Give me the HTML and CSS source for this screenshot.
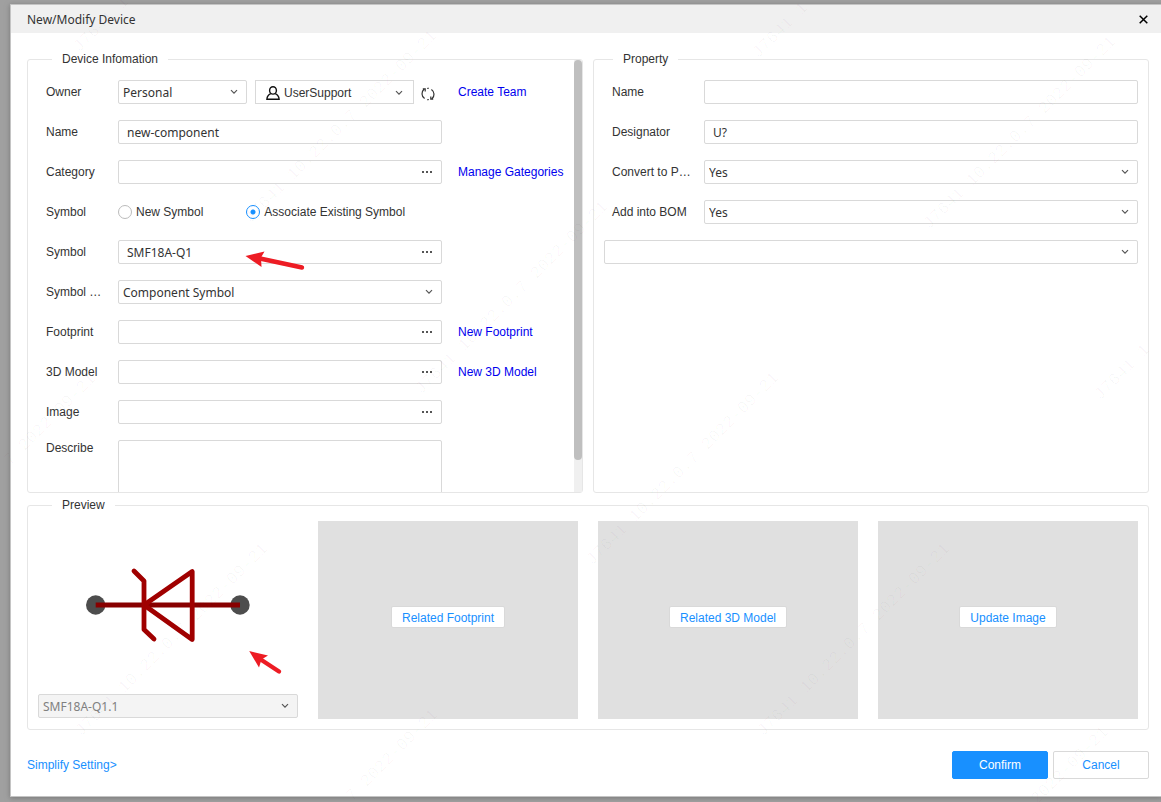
FILE: index.html
```html
<!DOCTYPE html>
<html lang="en">
<head>
<meta charset="utf-8">
<title>New/Modify Device</title>
<link rel="stylesheet" href="styles.css">
</head>
<body>
<svg class="sprite" aria-hidden="true">
  <symbol id="chevron" viewBox="0 0 8 6"><path d="M1 1.2 L4 4.2 L7 1.2" fill="none" stroke="currentColor" stroke-width="1.2"/></symbol>
</svg>

<main class="dialog">
  <header class="titlebar">
    <h1 class="title">New/Modify Device</h1>
    <button class="close" type="button" aria-label="Close">
      <svg width="9" height="9" viewBox="0 0 9 9"><path d="M0.7 0.7 L8.3 8.3 M8.3 0.7 L0.7 8.3" stroke="#000" stroke-width="1.5"/></svg>
    </button>
  </header>

  <form class="content">
    <div class="panels">
      <fieldset class="panel">
        <legend>Device Infomation</legend>
        <div class="scroller">
          <div class="rows device-rows">
            <div class="row">
              <label for="owner">Owner</label>
              <div class="owner">
                <div class="select">
                  <select id="owner"><option>Personal</option></select>
                  <svg class="chev"><use href="#chevron"/></svg>
                </div>
                <button class="user" type="button">
                  <svg width="14" height="14" viewBox="0 0 14 14" fill="none" stroke="#111" stroke-width="1.4"><ellipse cx="7" cy="4.400" rx="3.400" ry="3.700"/><path d="M4.800 7.600 C2.400 8.600 1.100 10.200 0.900 13.200 H13.100 C12.900 10.200 11.600 8.600 9.200 7.600"/></svg>
                  <span>UserSupport</span>
                  <svg class="chev"><use href="#chevron"/></svg>
                </button>
                <button class="refresh" type="button" aria-label="Refresh">
                  <svg width="14" height="14" viewBox="0 0 14 14" fill="none" stroke="#333" stroke-width="1.200"><path d="M3.600 11.600 C0.200 9.200 0.300 4.600 3 2.200 M1.800 1.800 H4.200 V4.400"/><path d="M10.400 2.400 C13.800 4.800 13.700 9.400 11 11.800 M12.200 12.200 H9.800 V9.600"/><path d="M6 1.400 L8 1.200 M6 12.800 L8 12.600" stroke-width="0.900"/></svg>
                </button>
              </div>
              <a href="#team">Create Team</a>
            </div>
            <div class="row">
              <label for="name">Name</label>
              <input class="text" id="name" type="text" value="new-component">
            </div>
            <div class="row">
              <label for="category">Category</label>
              <div class="picker"><input class="text" id="category" type="text"><button class="more" type="button" aria-label="Browse categories"><i></i><i></i><i></i></button></div>
              <a href="#categories">Manage Gategories</a>
            </div>
            <div class="row">
              <span>Symbol</span>
              <div class="radios">
                <label class="radio"><input type="radio" name="mode"><span>New Symbol</span></label>
                <label class="radio"><input type="radio" name="mode" checked><span>Associate Existing Symbol</span></label>
              </div>
            </div>
            <div class="row">
              <label for="symbol">Symbol</label>
              <div class="picker"><input class="text" id="symbol" type="text" value="SMF18A-Q1"><button class="more" type="button" aria-label="Browse symbols"><i></i><i></i><i></i></button></div>
            </div>
            <div class="row">
              <label for="symbol-type">Symbol …</label>
              <div class="select">
                <select id="symbol-type"><option>Component Symbol</option></select>
                <svg class="chev"><use href="#chevron"/></svg>
              </div>
            </div>
            <div class="row">
              <label for="footprint">Footprint</label>
              <div class="picker"><input class="text" id="footprint" type="text"><button class="more" type="button" aria-label="Browse footprints"><i></i><i></i><i></i></button></div>
              <a href="#footprint">New Footprint</a>
            </div>
            <div class="row">
              <label for="model">3D Model</label>
              <div class="picker"><input class="text" id="model" type="text"><button class="more" type="button" aria-label="Browse models"><i></i><i></i><i></i></button></div>
              <a href="#model">New 3D Model</a>
            </div>
            <div class="row">
              <label for="image">Image</label>
              <div class="picker"><input class="text" id="image" type="text"><button class="more" type="button" aria-label="Browse images"><i></i><i></i><i></i></button></div>
            </div>
            <div class="row row-area">
              <label for="describe">Describe</label>
              <textarea class="text area" id="describe"></textarea>
            </div>
          </div>
          <div class="track"><div class="thumb"></div></div>
        </div>
      </fieldset>

      <fieldset class="panel property">
        <legend>Property</legend>
        <div class="rows property-rows">
          <div class="row">
            <label for="p-name">Name</label>
            <input class="text" id="p-name" type="text">
          </div>
          <div class="row">
            <label for="designator">Designator</label>
            <input class="text" id="designator" type="text" value="U?">
          </div>
          <div class="row">
            <label for="pcb">Convert to P…</label>
            <div class="select"><select id="pcb"><option>Yes</option></select><svg class="chev"><use href="#chevron"/></svg></div>
          </div>
          <div class="row">
            <label for="bom">Add into BOM</label>
            <div class="select"><select id="bom"><option>Yes</option></select><svg class="chev"><use href="#chevron"/></svg></div>
          </div>
          <div class="select"><select aria-label="Add property"><option></option></select><svg class="chev"><use href="#chevron"/></svg></div>
        </div>
      </fieldset>
    </div>

    <fieldset class="panel preview">
      <legend>Preview</legend>
      <div class="tiles">
        <div class="symbol-tile">
          <svg class="symbol-art" viewBox="0 0 260 173" role="img" aria-label="Zener diode symbol">
            <circle cx="57.700" cy="84" r="9.700" fill="#4d4d4d"/>
            <circle cx="202" cy="84" r="9.700" fill="#4d4d4d"/>
            <path d="M57.700 84 H202" stroke="#880000" stroke-width="4.800"/>
            <path d="M96 50 L106 60 V108.500 L116 118" fill="none" stroke="#a00000" stroke-width="4.800" stroke-linecap="round" stroke-linejoin="round"/>
            <path d="M154.200 50.500 V118.500 L106 84 Z" fill="none" stroke="#a00000" stroke-width="4.800" stroke-linejoin="round"/>
          </svg>
          <div class="select">
            <select disabled aria-label="Symbol part"><option>SMF18A-Q1.1</option></select>
            <svg class="chev"><use href="#chevron"/></svg>
          </div>
        </div>
        <div class="tile"><button class="tile-button" type="button">Related Footprint</button></div>
        <div class="tile"><button class="tile-button" type="button">Related 3D Model</button></div>
        <div class="tile"><button class="tile-button" type="button">Update Image</button></div>
      </div>
    </fieldset>

    <footer class="footer">
      <a class="simplify" href="#simplify">Simplify Setting&gt;</a>
      <div class="actions">
        <button class="action primary" type="button">Confirm</button>
        <button class="action" type="button">Cancel</button>
      </div>
    </footer>
  </form>
</main>

<svg class="overlay" width="1161" height="802" viewBox="0 0 1161 802" aria-hidden="true">
  <g class="watermark">
    <text transform="translate(79 53) rotate(-45)">J7641 1</text>
    <text transform="translate(250 224) rotate(-45)">J7641 10.22.0.7 2022-09-21</text>
    <text transform="translate(421 395) rotate(-45)">J7641 10.22.0.7 2022-09-21</text>
    <text transform="translate(592 566) rotate(-45)">J7641 10.22.0.7 2022-09-21</text>
    <text transform="translate(763 737) rotate(-45)">J7641 10.22.0.7 2022-09-21</text>
    <text transform="translate(1037 805) rotate(-45)">2022-09-21</text>
    <text transform="translate(758 59) rotate(-45)">J7641 1</text>
    <text transform="translate(929 230) rotate(-45)">J7641 10.22.0.7 2022-09-21</text>
    <text transform="translate(1100 401) rotate(-45)">J7641 1</text>
    <text transform="translate(10 466) rotate(-45)">7 2022-09-21</text>
    <text transform="translate(81 737) rotate(-45)">J7641 10.22.0.7 2022-09-21</text>
    <text transform="translate(352 802) rotate(-45)">7 2022-09-21</text>
  </g>
  <g fill="#ed1c24" stroke="#ed1c24">
    <path d="M245.500 256 L264.500 251.500 L261 257.500 L261.500 267 Z" stroke="none"/>
    <path d="M260 258.500 L302 267.500" stroke-width="4.400" stroke-linecap="round"/>
    <path d="M249.200 651 L268 655.500 L261.500 659.500 L259 667.500 Z" stroke="none"/>
    <path d="M260 659 L279 671.500" stroke-width="4.400" stroke-linecap="round"/>
  </g>
</svg>
</body>
</html>
```
FILE: styles.css
```css
* { box-sizing: border-box; }

body {
  margin: 0;
  height: 100vh;
  padding: 5px 0 6px 11px;
  overflow: hidden;
  background: #a0a0a0;
  color: #333;
  font: 12px/16px "Liberation Sans", Arial, sans-serif;
}

button, input, select, textarea { font: inherit; color: inherit; margin: 0; }
a { color: #0000ee; text-decoration: none; }
.sprite { position: absolute; width: 0; height: 0; }

.dialog {
  display: flex;
  flex-direction: column;
  height: 100%;
  background: #fff;
  box-shadow: 0 0 0 1px #c4c4c4, 0 1px 5px 1px #777;
}

.titlebar {
  display: flex;
  align-items: center;
  justify-content: space-between;
  height: 28px;
  padding: 0 13px 0 16px;
  background: #f0f0f0;
}
.title { margin: 0; padding-top: 2px; font: 12px/26px "Noto Sans", sans-serif; }
.close { display: flex; padding: 0; border: 0; background: none; }

.content {
  flex: 1;
  min-height: 0;
  display: flex;
  flex-direction: column;
  padding: 18px 12px 17px 16px;
}

.panels { flex: 1; min-height: 0; display: flex; gap: 10px; margin-bottom: 4px; }
.panel {
  flex: 1;
  min-width: 0;
  margin: 0;
  padding: 0;
  border: 1px solid #e6e6e6;
  border-radius: 3px;
}
.panel legend { margin-left: 24px; padding: 0 10px; height: 16px; }
.property legend { margin-left: 19px; }

.scroller { display: flex; height: calc(100% + 7px); margin-top: -7px; overflow: hidden; }
.rows { display: flex; flex-direction: column; gap: 16px; min-width: 0; }
.device-rows { flex: 1; padding: 20px 0 0 18px; }
.property-rows { padding: 13px 10px 0; }
.track { width: 8px; background: #f0f0f0; }
.thumb { height: 400px; border-radius: 4px; background: #bfbfbf; }

.row { display: grid; align-items: center; flex: none; height: 24px; }
.device-rows .row { grid-template-columns: 72px minmax(0, 1fr) 132px; }
.device-rows .row > a { padding-left: 16px; white-space: nowrap; }
.property-rows .row { grid-template-columns: 92px minmax(0, 1fr); padding-left: 8px; }
.device-rows .row-area { height: 80px; align-items: start; }

.text {
  width: 100%;
  height: 24px;
  padding: 1px 8px 0;
  border: 1px solid #d9d9d9;
  border-radius: 2px;
  background: #fff;
  font-family: "Noto Sans", sans-serif;
  outline: 0;
}
.area { height: 80px; resize: none; }

.picker, .select { display: grid; min-width: 0; }
.picker > *, .select > * { grid-area: 1 / 1; }
.more {
  display: flex;
  align-items: center;
  justify-self: end;
  gap: 2px;
  padding: 0 10px;
  border: 0;
  background: none;
}
.more i { width: 2px; height: 2px; background: #555; }

.select select {
  width: 100%;
  height: 24px;
  padding: 2px 24px 0 4px;
  appearance: none;
  border: 1px solid #d9d9d9;
  border-radius: 2px;
  background: #fff;
  font-family: "Noto Sans", sans-serif;
}
.select select:disabled { background: #f4f4f4; color: #808080; opacity: 1; }
.chev { width: 8px; height: 6px; color: #555; pointer-events: none; }
.select .chev { place-self: center end; margin-right: 9px; }

.owner {
  display: grid;
  grid-template-columns: minmax(0, 129fr) minmax(0, 167fr) 28px;
  align-items: center;
}
.user {
  display: flex;
  align-items: center;
  gap: 4px;
  height: 24px;
  margin-left: 8px;
  padding: 1px 10px 0;
  border: 1px solid #d9d9d9;
  background: #fff;
  text-align: left;
}
.user span { flex: 1; }
.refresh { display: flex; padding: 3px 7px 0; border: 0; background: none; }

.radios { display: flex; gap: 43px; white-space: nowrap; }
.radio { display: flex; align-items: center; gap: 4px; }
.radio input {
  width: 14px;
  height: 14px;
  appearance: none;
  border: 1px solid #bbb;
  border-radius: 50%;
  background: #fff;
}
.radio input:checked {
  border-color: #1890ff;
  background: radial-gradient(circle, #1890ff 2px, #fff 3px);
}

.preview { flex: none; }
.tiles {
  display: grid;
  grid-template-columns: repeat(4, minmax(0, 1fr));
  gap: 20px;
  padding: 8px 10px 10px;
}
.symbol-tile { display: flex; flex-direction: column; height: 198px; padding-bottom: 1px; }
.symbol-art { flex: 1; min-height: 0; width: 100%; }
.tile {
  display: flex;
  align-items: center;
  justify-content: center;
  padding-bottom: 6px;
  background: #e0e0e0;
}
.tile-button {
  height: 22px;
  padding: 1px 10px 0;
  border: 1px solid #d9d9d9;
  border-radius: 2px;
  background: #fff;
  color: #1890ff;
}

.footer {
  display: flex;
  align-items: center;
  justify-content: space-between;
  padding-top: 21px;
}
.simplify { color: #1890ff; }
.actions { display: flex; gap: 5px; }
.action {
  width: 96px;
  height: 28px;
  border: 1px solid #d9d9d9;
  border-radius: 2px;
  background: #fff;
  color: #1890ff;
}
.primary { border-color: #1890ff; background: #1890ff; color: #fff; }

.overlay { position: absolute; top: 0; left: 0; pointer-events: none; }
.watermark {
  fill: #000;
  fill-opacity: 0.03;
  font: 17px "Liberation Mono", monospace;
}
```
